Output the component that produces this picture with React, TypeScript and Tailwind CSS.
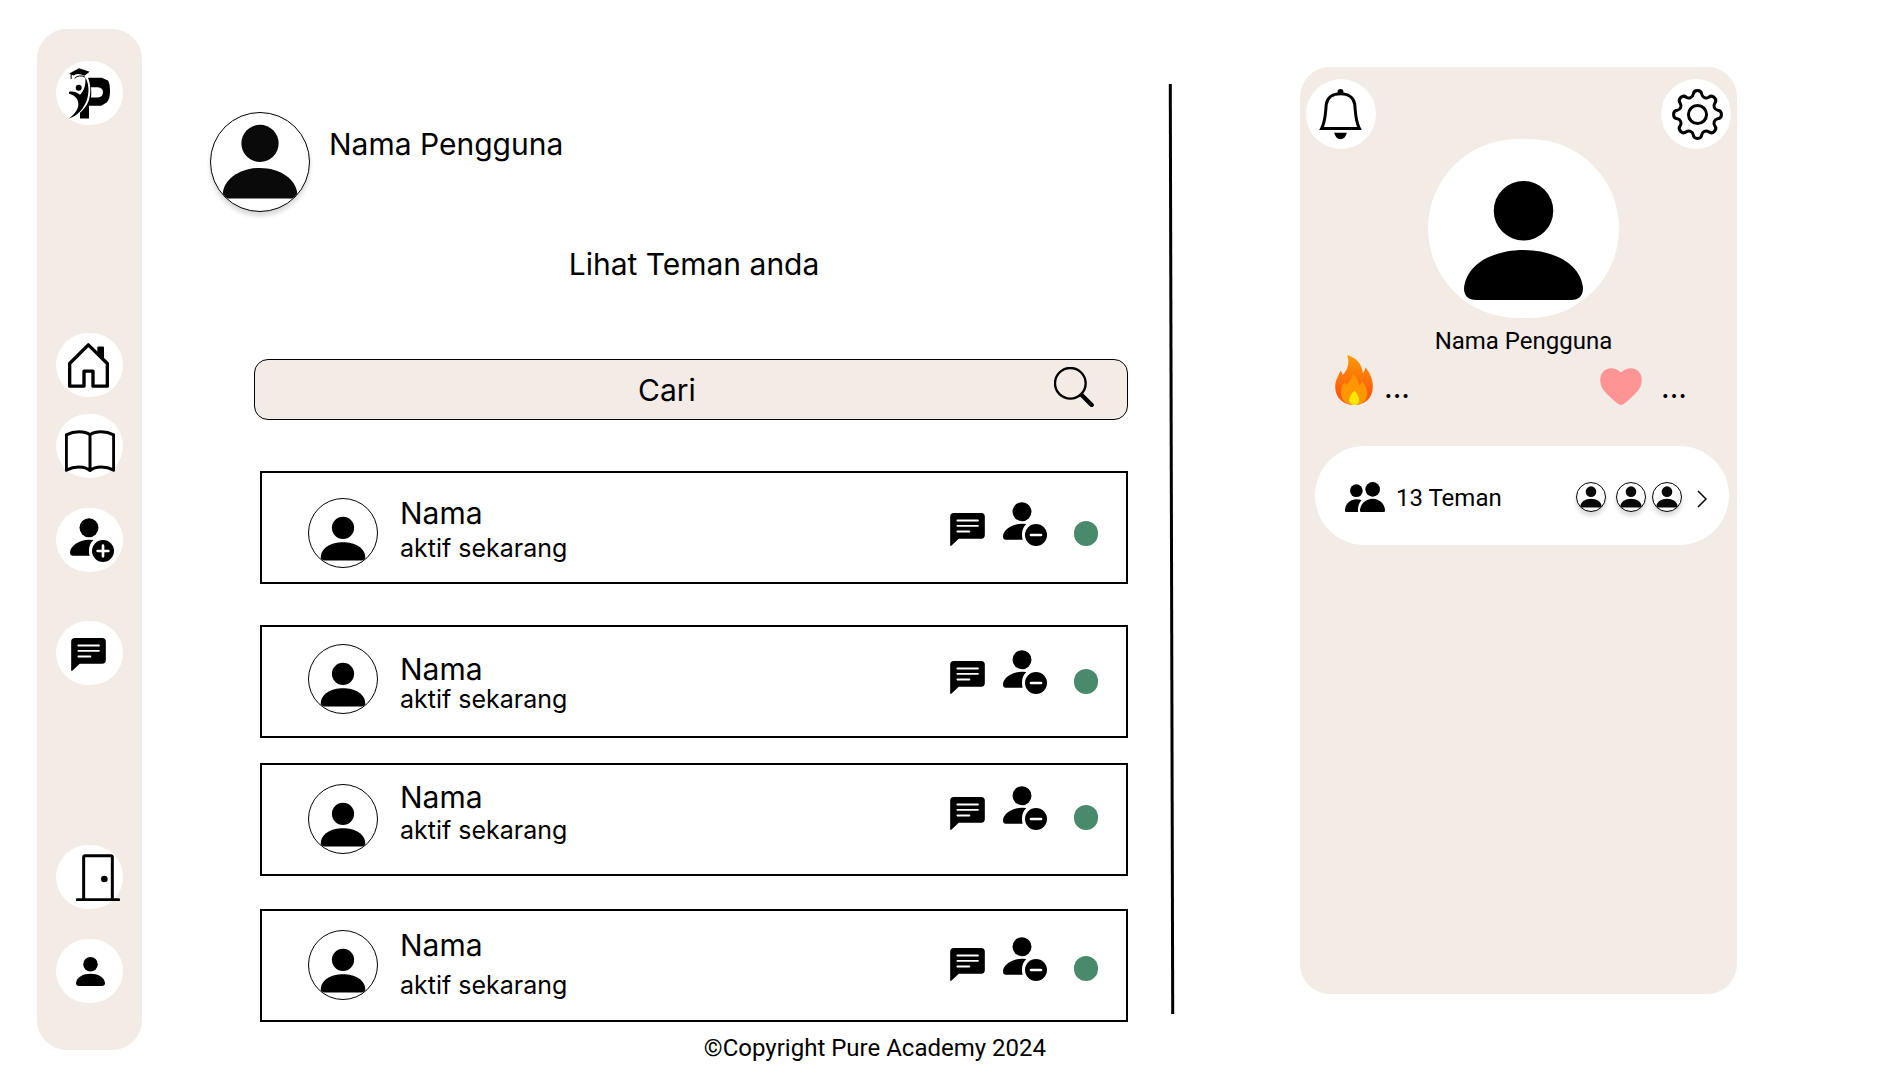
import type { ReactNode } from "react";

function Person({ className }: { className: string }) {
  return (
    <svg viewBox="0 0 88 88" className={className} aria-hidden="true">
      <circle cx="44" cy="22" r="22" />
      <path d="M0 79C2 61 22 51 44 51S86 61 88 79Q88 88 79 88H9Q0 88 0 79Z" />
    </svg>
  );
}

function PersonBadge({ kind }: { kind: "plus" | "minus" }) {
  return (
    <svg viewBox="0 0 132 132" className="size-11" aria-hidden="true">
      <circle cx="57" cy="29" r="28.500" />
      <path d="M0 104C0 82 30 65 57 65Q64 65 70 66C61 74 57 85 57 98Q57 107 59 113H9Q0 113 0 104Z" />
      <circle cx="99" cy="99" r="33" />
      <path
        d={kind === "plus" ? "M83 99H115M99 83V115" : "M84 99H114"}
        stroke="white"
        strokeWidth="8"
        strokeLinecap="round"
      />
    </svg>
  );
}

function Chat() {
  return (
    <svg viewBox="0 0 105 100" className="h-[33px] w-[35px]" aria-hidden="true">
      <path d="M0 11Q0 0 11 0H94Q105 0 105 11V67Q105 78 94 78H26L5 98Q0 102 0 97Z" />
      <path d="M22 23H84M22 39H84M22 56H58" stroke="white" strokeWidth="6" strokeLinecap="round" />
    </svg>
  );
}

function Home() {
  return (
    <svg viewBox="0 0 123 134" className="h-[45px] w-[41px]" aria-hidden="true">
      <path d="M88 13Q88 10 91 10H105Q108 10 108 13V54L88 34Z" />
      <path
        d="M61 5L118 61V129H75V84H48V129H5V61Z"
        fill="none"
        stroke="currentColor"
        strokeWidth="10"
        strokeLinejoin="round"
      />
    </svg>
  );
}

function Book() {
  return (
    <svg viewBox="0 0 150 125" className="h-[42px] w-[50px]" aria-hidden="true">
      <path
        d="M4 14C28 2 58 2 75 14C92 2 122 2 146 14V120C122 107 92 107 75 121C58 107 28 107 4 120ZM75 14V121"
        fill="none"
        stroke="currentColor"
        strokeWidth="9"
        strokeLinejoin="round"
      />
    </svg>
  );
}

function Door() {
  return (
    <svg viewBox="0 0 132 141" className="h-[47px] w-11" aria-hidden="true">
      <path
        d="M4 137H128M23 137V10Q23 5 28 5H104Q109 5 109 10V137"
        fill="none"
        stroke="currentColor"
        strokeWidth="9"
        strokeLinecap="round"
      />
      <circle cx="85" cy="75" r="10" />
    </svg>
  );
}

function Logo() {
  return (
    <svg viewBox="0 0 123 152" className="h-[51px] w-[41px]" role="img" aria-label="Pure Academy">
      <path
        fillRule="evenodd"
        d="M57 29H98L117 37Q123 46 123 70Q123 92 114 102L97 113H60V151H33V134C44 124 54 112 59 98C66 76 66 50 57 29ZM66 57H86Q102 59 102 72Q102 86 86 88H66Q68 72 66 57Z"
      />
      <path d="M0 71C14 68 24 73 33 80C45 68 51 50 49 28C60 46 61 72 54 94C44 122 26 143 0 151C18 138 29 122 28 106C27 90 14 80 0 77Z" />
      <circle cx="29" cy="59" r="9" />
      <path d="M1 16L30 0L62 11L46 23Q28 13 14 22L8 20V32L5 33V19Z" />
      <path d="M17 30Q31 18 48 27" fill="none" stroke="currentColor" strokeWidth="3" />
    </svg>
  );
}

function Bell() {
  return (
    <svg viewBox="0 0 130 151" className="h-[50px] w-[43px]" aria-hidden="true">
      <circle cx="65" cy="9" r="9" />
      <path
        d="M8 119C20 96 19 76 22 46C25 24 44 14 65 14S105 24 108 46C111 76 110 96 122 119Z"
        fill="none"
        stroke="currentColor"
        strokeWidth="9"
      />
      <path d="M46 132H84Q80 151 65 151T46 132Z" />
    </svg>
  );
}

/* Eight round teeth joined by round valleys, all arcs of one radius. */
function Gear() {
  const at = (x: number, y: number, turn: number) => {
    const a = (turn * Math.PI) / 180;
    return `${(76 + x * Math.cos(a) - y * Math.sin(a)).toFixed(1)} ${(76 + x * Math.sin(a) + y * Math.cos(a)).toFixed(1)}`;
  };
  const teeth = Array.from(
    { length: 8 },
    (_, i) => `A13 13 0 0 1 ${at(12.9, -60, i * 45)}A13 13 0 0 0 ${at(-12.9, -60, (i + 1) * 45)}`,
  );
  return (
    <svg viewBox="0 0 152 152" className="size-[51px]" aria-hidden="true">
      <g fill="none" stroke="currentColor" strokeWidth="9">
        <path d={`M${at(-12.9, -60, 0)}${teeth.join("")}Z`} />
        <circle cx="76" cy="76" r="27" />
      </g>
    </svg>
  );
}

function Magnifier() {
  return (
    <svg viewBox="0 0 120 120" className="size-10" aria-hidden="true">
      <circle cx="49" cy="49" r="46" fill="none" stroke="currentColor" strokeWidth="7" />
      <path d="M83 84L113 114" stroke="currentColor" strokeWidth="13" strokeLinecap="round" />
    </svg>
  );
}

function Flame() {
  return (
    <svg viewBox="0 0 113 150" className="h-[50px] w-[38px]" aria-hidden="true">
      <defs>
        <linearGradient id="flame" x1="0" y1="0" x2="0" y2="1">
          <stop offset="0" stopColor="#ff9a00" />
          <stop offset="0.750" stopColor="#ff5d0d" />
        </linearGradient>
      </defs>
      <path
        fill="url(#flame)"
        d="M36 0C70 10 80 32 83 54C88 49 90 43 91 37C104 54 113 72 113 95C113 130 88 150 57 150C25 150 0 128 0 95C0 75 10 62 16 47C20 50 21 55 22 60C38 45 44 22 36 0Z"
      />
      <path
        fill="#ff9800"
        d="M54 57C66 68 72 80 71 92C76 88 80 84 81 78C92 92 96 103 96 115C96 138 80 150 57 150C34 150 18 136 18 115C18 98 22 88 29 82C30 86 32 88 34 90C42 82 50 70 54 57Z"
      />
      <path fill="#ffe600" d="M58 107C67 116 72 127 72 138C72 146 66 150 57 150C48 150 42 145 42 136C42 124 49 114 58 107Z" />
    </svg>
  );
}

function Heart() {
  return (
    <svg viewBox="0 0 126 110" className="h-[37px] w-[42px]" aria-hidden="true">
      <path
        fill="#ff9494"
        d="M63 14C48-4 22-4 9 11C-5 30 0 54 14 70C26 84 42 98 56 108Q63 112 70 108C84 98 100 84 112 70C126 54 131 30 117 11C104-4 78-4 63 14Z"
      />
    </svg>
  );
}

function People() {
  return (
    <svg viewBox="0 0 120 90" className="h-[30px] w-10" aria-hidden="true">
      <circle cx="83" cy="22" r="22" />
      <circle cx="34" cy="26" r="19" />
      <path d="M45 86C45 66 62 50 83 50S120 66 120 86Q120 90 116 90H49Q45 90 45 86Z" />
      <path d="M0 86C0 66 16 52 34 52Q43 52 50 55C42 62 38 74 39 90H4Q0 90 0 86Z" />
    </svg>
  );
}

function Avatar({ className }: { className: string }) {
  return (
    <span className={`block shrink-0 overflow-hidden rounded-full border border-black bg-white shadow-[0_4px_4px_rgba(0,0,0,0.15)] ${className}`}>
      <svg viewBox="0 0 300 300" className="size-full fill-[#0a0a0a]" aria-hidden="true">
        <circle cx="150" cy="93" r="57" />
        <path d="M36 248C38 202 90 168 150 168S262 202 264 248V262H36Z" />
      </svg>
    </span>
  );
}

function FriendAvatar() {
  return (
    <span className="block size-[70px] shrink-0 overflow-hidden rounded-full border border-black">
      <svg viewBox="0 0 300 300" className="size-full" aria-hidden="true">
        <circle cx="150" cy="127" r="49" />
        <path d="M52 258C52 216 98 191 150 191S248 216 248 258V271H52Z" />
      </svg>
    </span>
  );
}

const spot = "flex h-16 w-[67px] shrink-0 rounded-[32px] bg-white";

function NavLink({ label, className, children }: { label: string; className: string; children: ReactNode }) {
  return (
    <a href="#" aria-label={label} className={`${spot} ${className}`}>
      {children}
    </a>
  );
}

const friends = [
  { id: 1, row: "mt-[51px]", avatar: "pt-[25px]", text: "gap-[5px] pt-[25px]", actions: "pt-[29px]" },
  { id: 2, row: "mt-[41px]", avatar: "pt-[17px]", text: "pt-[27px]", actions: "pt-[23px]" },
  { id: 3, row: "mt-[25px]", avatar: "pt-[19px]", text: "gap-[3px] pt-[17px]", actions: "pt-[21px]" },
  { id: 4, row: "mt-[33px]", avatar: "pt-[19px]", text: "gap-[10px] pt-[19px]", actions: "pt-[26px]" },
];

export default function App() {
  return (
    <div className="flex min-h-screen bg-white font-['Inter',sans-serif] text-black">
      <nav
        aria-label="Menu utama"
        className="mt-[29px] mb-[30px] ml-[37px] flex w-[105px] shrink-0 flex-col items-center rounded-[30px] bg-[#f2ebe6] pt-8 pb-[47px]"
      >
        <NavLink label="Pure Academy" className="items-center justify-center">
          <Logo />
        </NavLink>
        <NavLink label="Beranda" className="mt-52 items-center justify-center pr-[2px]">
          <Home />
        </NavLink>
        <NavLink label="Belajar" className="mt-[17px] items-end justify-center pb-[6px]">
          <Book />
        </NavLink>
        <NavLink label="Tambah teman" className="mt-[30px] items-center justify-center pl-1">
          <PersonBadge kind="plus" />
        </NavLink>
        <NavLink label="Pesan" className="mt-[49px] items-center justify-center pt-[2px] pr-[2px]">
          <Chat />
        </NavLink>
        <NavLink label="Keluar" className="mt-auto items-center justify-end pr-[3px]">
          <Door />
        </NavLink>
        <NavLink label="Profil" className="mt-[30px] items-center justify-center pl-[2px]">
          <Person className="size-[29px]" />
        </NavLink>
      </nav>

      <main className="min-w-0 flex-1 pt-28 pr-[42px] pl-[68px]">
        <header className="flex gap-[19px]">
          <Avatar className="size-[100px]" />
          <h1 className="pt-[14px] text-[30px] leading-9">Nama Pengguna</h1>
        </header>

        <section className="pl-11">
          <h2 className="mt-[34px] pl-[6px] text-center text-[30px] leading-9">Lihat Teman anda</h2>

          <form className="relative mt-[77px]" onSubmit={(e) => e.preventDefault()}>
            <input
              type="text"
              aria-label="Cari"
              placeholder="Cari"
              className="block h-[61px] w-full rounded-[14px] border border-black bg-[#f2ebe6] pr-12 text-center text-[30px] placeholder:text-black placeholder:opacity-100"
            />
            <button type="submit" aria-label="Cari teman" className="absolute top-2 right-[34px]">
              <Magnifier />
            </button>
          </form>

          <ul className="pl-[6px]">
            {friends.map((f) => (
              <li key={f.id} className={`flex h-[113px] items-start border-2 border-black pr-7 pl-[46px] ${f.row}`}>
                <div className={f.avatar}>
                  <FriendAvatar />
                </div>
                <div className={`flex flex-1 flex-col pl-[22px] ${f.text}`}>
                  <span className="text-[30px] leading-[30px]">Nama</span>
                  <span className="text-[25px] leading-[30px]">aktif sekarang</span>
                </div>
                <div className={`flex items-end ${f.actions}`}>
                  <button type="button" aria-label="Kirim pesan">
                    <Chat />
                  </button>
                  <button type="button" aria-label="Hapus teman" className="ml-[18px]">
                    <PersonBadge kind="minus" />
                  </button>
                  <span role="img" aria-label="Aktif" className="ml-[27px] h-[25px] w-6 rounded-full bg-[#488a6b]" />
                </div>
              </li>
            ))}
          </ul>

          <footer className="mt-[11px] pr-[82px] text-right font-['Roboto',sans-serif] text-2xl leading-[30px]">
            ©Copyright Pure Academy 2024
          </footer>
        </section>
      </main>

      <div aria-hidden="true" className="mt-[84px] mb-[66px] w-[3px] shrink-0 rotate-[-0.15deg] bg-black" />

      <aside className="mt-[67px] mr-[163px] mb-[86px] ml-[127px] w-[437px] shrink-0 rounded-[30px] bg-[#f2ebe6] pt-3 font-['Roboto',sans-serif]">
        <div className="flex items-start justify-between px-[6px]">
          <button type="button" aria-label="Notifikasi" className="flex size-[70px] items-center justify-center rounded-full bg-white pr-[2px]">
            <Bell />
          </button>
          <div className="mt-[60px] ml-[10px] flex h-[179px] w-[191px] items-end justify-center rounded-[90px] bg-white pb-[18px]">
            <Person className="size-[119px]" />
          </div>
          <button type="button" aria-label="Pengaturan" className="flex size-[70px] items-center justify-center rounded-full bg-white pl-[2px]">
            <Gear />
          </button>
        </div>
        <p className="mt-[9px] pl-[10px] text-center text-2xl leading-7">Nama Pengguna</p>
        <div className="flex items-end justify-between pr-[50px] pl-[35px] font-['Inter',sans-serif] text-[30px] leading-9">
          <span className="flex items-end gap-[11px]">
            <Flame />
            <span>...</span>
          </span>
          <span className="flex items-end gap-[19px]">
            <Heart />
            <span>...</span>
          </span>
        </div>
        <a href="#" className="mt-[41px] mr-2 ml-[15px] flex h-[99px] items-center rounded-[50px] bg-white pt-[3px] pr-[22px] pl-[30px]">
          <People />
          <span className="ml-[11px] flex-1 pt-[2px] text-2xl leading-[30px]">13 Teman</span>
          <Avatar className="size-[30px]" />
          <Avatar className="ml-[10px] size-[30px]" />
          <Avatar className="ml-[6px] size-[30px]" />
          <svg viewBox="0 0 10 18" className="mt-1 ml-[15px] h-[18px] w-[10px]" aria-hidden="true">
            <path d="M1 1L9 9L1 17" fill="none" stroke="currentColor" strokeWidth="1.500" />
          </svg>
        </a>
      </aside>
    </div>
  );
}
